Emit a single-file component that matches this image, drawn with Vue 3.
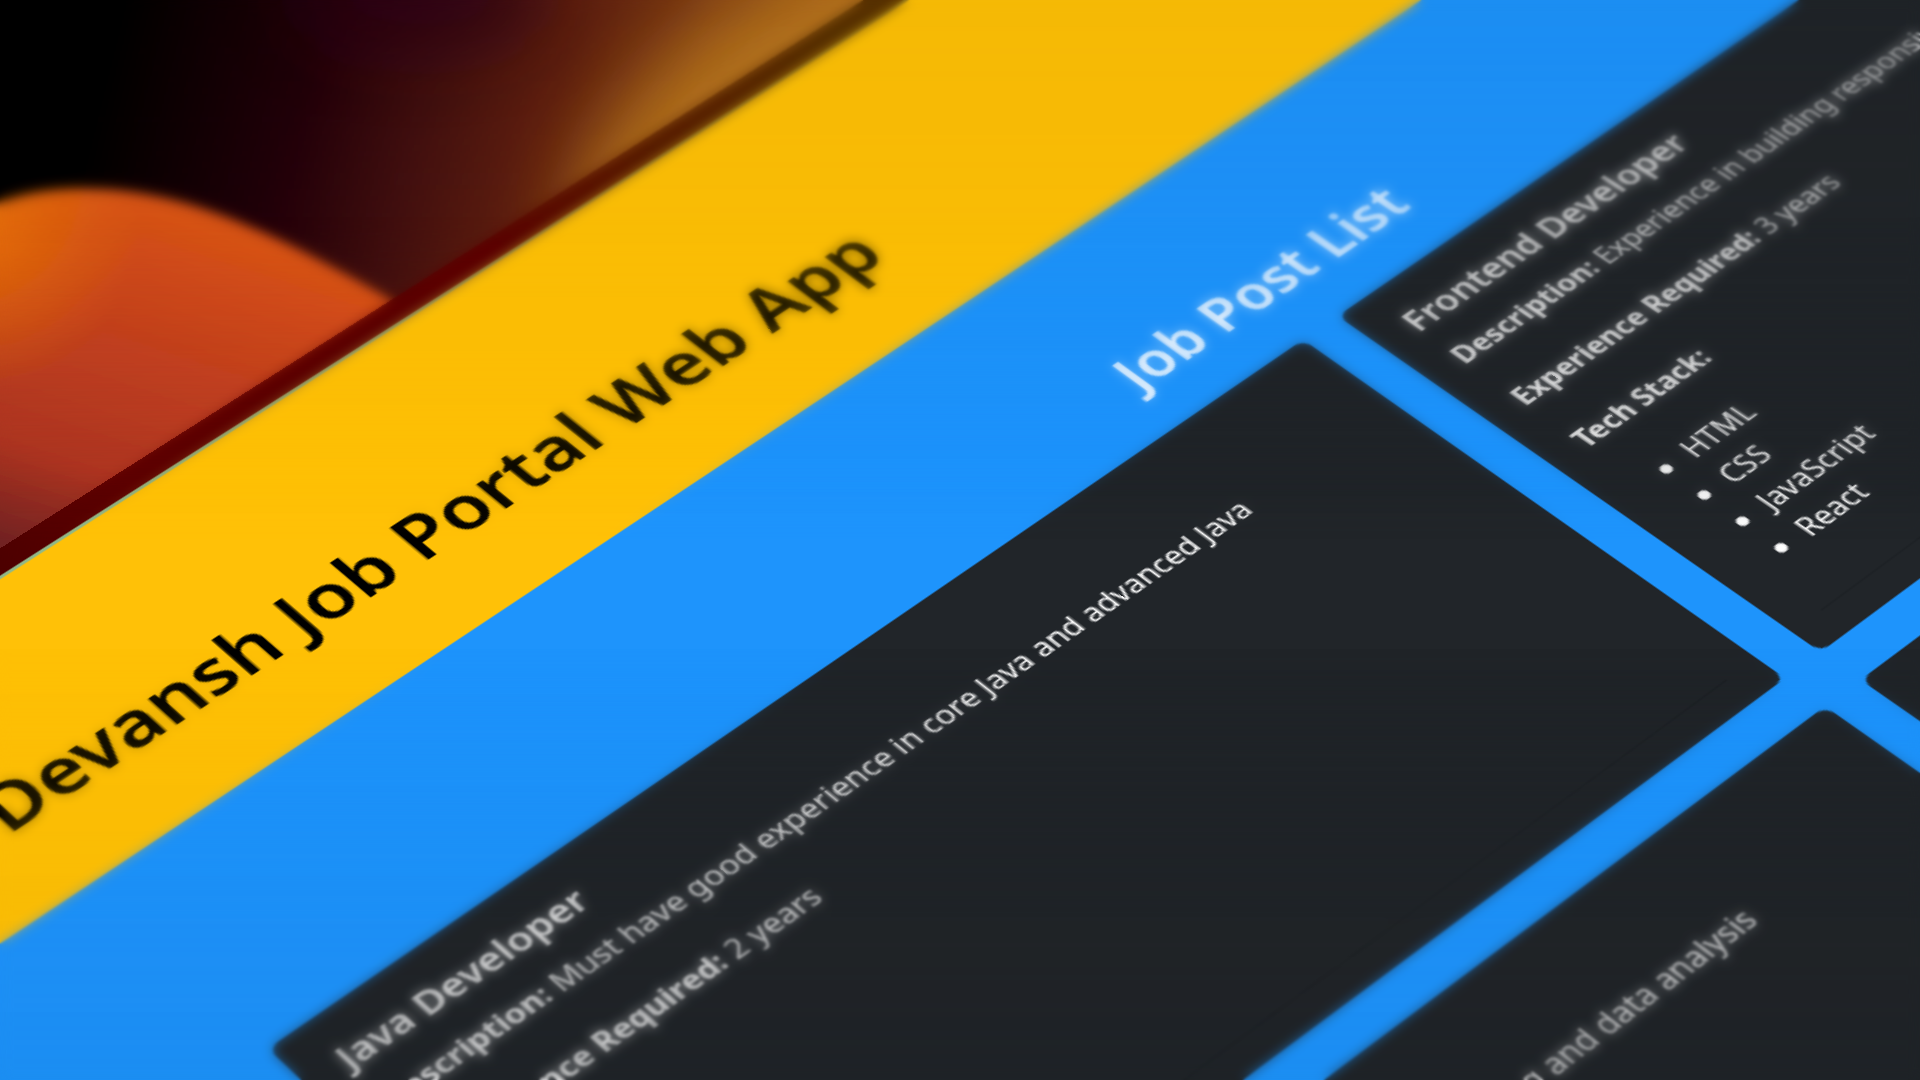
<script setup>
const jobs = [
  {
    title: 'Java Developer',
    description: 'Must have good experience in core Java and advanced Java',
    years: '2 years',
    stack: ['Core Java', 'J2EE', 'Spring Boot', 'Hibernate']
  },
  {
    title: 'Frontend Developer',
    description: 'Experience in building responsive web applications using React',
    years: '3 years',
    stack: ['HTML', 'CSS', 'JavaScript', 'React']
  },
  {
    title: 'Data Scientist',
    description: 'Good background in machine learning and data analysis',
    years: '4 years',
    stack: ['Python', 'Machine Learning', 'Data Analysis']
  },
  {
    title: 'Backend Developer',
    description: 'Experience in designing APIs',
    years: '3 years',
    stack: ['Node', 'Express', 'MongoDB']
  }
]
</script>

<template>
  <main class="scene">
    <svg class="wallpaper" viewBox="0 0 1920 1080" preserveAspectRatio="xMinYMin slice" aria-hidden="true">
      <defs>
        <linearGradient id="dusk" gradientUnits="userSpaceOnUse" x1="90" y1="90" x2="660" y2="230">
          <stop offset="0" stop-color="#000000" />
          <stop offset="0.34" stop-color="#22000a" />
          <stop offset="0.55" stop-color="#421010" />
          <stop offset="0.75" stop-color="#601f10" />
          <stop offset="1" stop-color="#7c3a14" />
        </linearGradient>
        <linearGradient id="hill" gradientUnits="userSpaceOnUse" x1="170" y1="190" x2="50" y2="560">
          <stop offset="0" stop-color="#e05816" />
          <stop offset="0.35" stop-color="#c8441f" />
          <stop offset="0.75" stop-color="#ae3622" />
          <stop offset="1" stop-color="#702220" />
        </linearGradient>
        <radialGradient id="ember" gradientUnits="userSpaceOnUse" cx="-30" cy="220" r="170">
          <stop offset="0" stop-color="#ec7404" />
          <stop offset="1" stop-color="#ec7404" stop-opacity="0" />
        </radialGradient>
        <filter id="soft" x="-20%" y="-20%" width="140%" height="140%"><feGaussianBlur stdDeviation="5" /></filter>
        <filter id="glow" x="-60%" y="-150%" width="220%" height="400%"><feGaussianBlur stdDeviation="36" /></filter>
      </defs>
      <rect width="1920" height="1080" fill="url(#dusk)" />
      <ellipse cx="420" cy="0" rx="130" ry="50" fill="#2c0414" opacity="0.7" filter="url(#glow)" />
      <ellipse cx="770" cy="90" rx="240" ry="86" fill="#ba761c" filter="url(#glow)" transform="rotate(-38 770 90)" />
      <g filter="url(#soft)">
        <path d="M-30 215C20 190 60 187 100 189C190 193 270 230 395 302L500 600H-30Z" fill="url(#hill)" />
        <path d="M-30 215C20 190 60 187 100 189C190 193 270 230 395 302L500 600H-30Z" fill="url(#ember)" />
      </g>
    </svg>

    <div class="plane">
      <div class="menubar"></div>
      <header class="masthead"><h1>Devansh Job Portal Web App</h1></header>
      <section class="board">
        <h2>Job Post List</h2>
        <div class="grid">
          <article v-for="job in jobs" :key="job.title" class="card">
            <div class="body">
              <h3>{{ job.title }}</h3>
              <p><strong>Description:</strong> {{ job.description }}</p>
              <p><strong>Experience Required:</strong> {{ job.years }}</p>
              <p><strong>Tech Stack:</strong></p>
              <ul>
                <li v-for="tech in job.stack" :key="tech">{{ tech }}</li>
              </ul>
            </div>
          </article>
        </div>
      </section>
    </div>

    <div class="focus near"></div>
    <div class="focus far"></div>
    <div class="shade"></div>
  </main>
</template>

<style>
body {
  margin: 0;
  background: #000;
}
</style>

<style scoped>
.scene {
  position: relative;
  height: 100vh;
  overflow: hidden;
  background: #000;
  font-family: "Noto Sans", "Open Sans", sans-serif;
  font-size: 16px;
  line-height: 24px;
}
.wallpaper {
  position: absolute;
  inset: 0;
  width: 100%;
  height: 100%;
}
/* The page lies on a tilted sheet that ends 850px down. */
.plane {
  position: absolute;
  top: 0;
  left: 0;
  width: 1920px;
  height: 850px;
  overflow: hidden;
  box-shadow: 0 200px 0 #000;
  transform-origin: 0 0;
  transform: matrix3d(1.5905, -0.9464, 0, 0.0001159, 1.1888, 0.9501, 0, -0.0002, 0, 0, 1, 0, 1337.6, 316, 0, 1) translate(-972px, -340px);
}
.menubar {
  height: 17px;
  background:
    linear-gradient(90deg, #90b888 32%, #8f8a40 40%, #806a20 50%) bottom / 100% 2px no-repeat,
    linear-gradient(90deg, #4a0000 19%, #5e0000 24%, #5e0000 36%, #5a1c00 42%, #5a3200 49%);
}
.masthead {
  box-sizing: border-box;
  height: 188px;
  padding: 0 275px 43px;
  display: flex;
  align-items: flex-end;
  background: #ffc107;
}
h1,
h2,
h3 {
  margin: 0;
  font-weight: 600;
}
h1 {
  font-size: 41px;
  line-height: 48px;
  color: #000;
}
.board {
  padding: 75px 286px;
  background: #1e94fc;
}
h2 {
  margin-bottom: 22px;
  font-size: 32px;
  line-height: 38px;
  text-align: center;
  color: #fff;
}
.grid {
  display: grid;
  grid-template-columns: 1fr 1fr;
  gap: 24px;
}
.card {
  min-height: 311px;
  box-sizing: border-box;
  padding: 17px 20px;
  border-radius: 6px;
  background: #212529;
  color: #fff;
}
.body {
  min-height: 277px;
  box-sizing: border-box;
  border-bottom: 1px solid #1d2125;
}
h3 {
  margin-bottom: 8px;
  font-size: 20px;
  line-height: 24px;
}
p {
  margin: 0 0 16px;
}
strong {
  font-weight: 700;
}
ul {
  margin: 0;
  padding-left: 32px;
}
.focus,
.shade {
  position: absolute;
  inset: 0;
  pointer-events: none;
}
.near {
  backdrop-filter: blur(1px);
  mask-image: linear-gradient(#000 20%, transparent 46%, transparent 62%, #000 85%);
}
.far {
  backdrop-filter: blur(6px);
  mask-image: linear-gradient(rgba(0, 0, 0, 0.75), rgba(0, 0, 0, 0.6) 20%, rgba(0, 0, 0, 0.3) 38%, transparent 50%, transparent 60%, rgba(0, 0, 0, 0.4) 78%, rgba(0, 0, 0, 0.6));
}
.shade {
  background: linear-gradient(rgba(0, 0, 0, 0.04), transparent 50%, transparent 58%, rgba(0, 0, 0, 0.04));
}
</style>
